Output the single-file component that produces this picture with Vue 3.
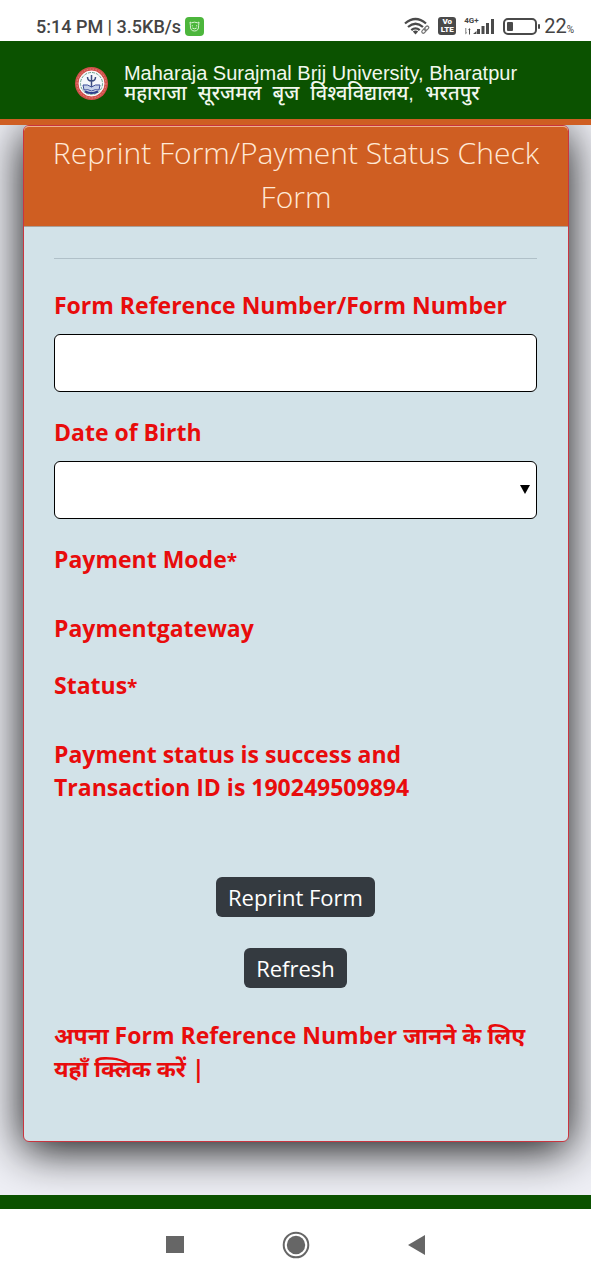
<script setup>
import { ref } from 'vue'

const formNumber = ref('')
const birthDate = ref('')
</script>

<template>
  <div class="screen">
    <div class="status-bar">
      <div class="status-group">
        <span class="clock">5:14 PM | 3.5KB/s</span>
        <svg class="app-badge" width="19" height="19" viewBox="0 0 19 19" aria-hidden="true">
          <rect width="19" height="19" rx="4" fill="#4cb63c" />
          <path d="M5 5l1.500.8Q9.500 4.500 12.500 5.800L14 5l-.4 3.500q.4 5.500-4.100 5.500T5.400 8.500z" fill="none" stroke="#d9f3d3" stroke-width="1" />
          <path d="M7.300 8.200v1.200M11.700 8.200v1.200M7.300 11q2.200 1.600 4.400 0" fill="none" stroke="#d9f3d3" stroke-width="1" />
        </svg>
      </div>
      <div class="status-group">
        <svg width="26" height="19" viewBox="0 0 26 19" fill="none" stroke="#4a4a4a" aria-hidden="true">
          <path d="M1 6.500Q11.500-2.500 22 6.500M4 10Q11.500 3.500 19 10M7.300 13.200Q11.500 9.600 15.700 13.200" stroke-width="2.300" />
          <path d="M8.800 14.500q2.700-2 5.400 0L11.500 17.500z" fill="#4a4a4a" stroke="none" />
          <g stroke="#777" stroke-width="1.200">
            <rect x="17.500" y="12.500" width="5" height="3" rx="1.500" transform="rotate(-45 20 14)" />
            <rect x="20" y="9.800" width="5" height="3" rx="1.500" transform="rotate(-45 22.500 11.300)" />
          </g>
        </svg>
        <span class="volte"><span>Vo</span><span>LTE</span></span>
        <span class="signal">
          <span class="network">4G+</span>
          <svg width="31" height="17" viewBox="0 0 31 17" fill="#4a4a4a" aria-hidden="true">
            <path d="M1 10h1.200v4.500H3L1.500 16.500V10zM5 16.500V12H4.200L5.500 10l1 2H6v4.500z" />
            <path d="M9 16l3.500-3v3zM13 11h3v5h-3zM17.500 8h3v8h-3zM22 5h3v11h-3zM27 1h3v15h-3z" />
          </svg>
        </span>
        <svg width="37" height="17" viewBox="0 0 37 17" aria-hidden="true">
          <rect x="1" y="1" width="32" height="15" rx="4" fill="none" stroke="#4a4a4a" stroke-width="2" />
          <rect x="4" y="4" width="6" height="9" rx="1" fill="#4a4a4a" />
          <rect x="35" y="6" width="2" height="5" rx="1" fill="#4a4a4a" />
        </svg>
        <span class="battery">22<small>%</small></span>
      </div>
    </div>

    <header class="site-header">
      <svg class="crest" width="35" height="35" viewBox="0 0 35 35" aria-hidden="true">
        <circle cx="17.500" cy="17.500" r="16.500" fill="#d2504b" />
        <circle cx="17.500" cy="17.500" r="14.500" fill="none" stroke="#e08a80" stroke-width="1" stroke-dasharray="1.500 1.500" />
        <circle cx="17.500" cy="17.500" r="12.500" fill="#f5f8fc" stroke="#fff" />
        <circle cx="17.500" cy="17.500" r="11" fill="none" stroke="#6aa08d" stroke-width="1" stroke-dasharray="3 1" />
        <path d="M17.500 9v12M13.500 11q0 4 4 4t4-4M15 21h5" fill="none" stroke="#3c4d80" stroke-width="1.500" />
        <path d="M9 19q5-1 8.500 2 3.500-3 8.500-2l-1 5q-4-1-7.500 1-3.500-2-7.500-1z" fill="#c6d2ea" stroke="#3b4c98" stroke-width="1" />
        <path d="M11 25.500q6.500 3 13 0" fill="none" stroke="#2f3f8b" stroke-width="2" />
      </svg>
      <div class="university">
        <span>Maharaja Surajmal Brij University, Bharatpur</span>
        <span class="university-hi" lang="hi">महाराजा &nbsp;सूरजमल &nbsp;बृज &nbsp;विश्वविद्यालय, &nbsp;भरतपुर</span>
      </div>
    </header>

    <main class="page">
      <section class="card">
        <h1>Reprint Form/Payment Status Check Form</h1>
        <form class="card-body" @submit.prevent>
          <hr />
          <label for="form-number">Form Reference Number/Form Number</label>
          <input id="form-number" v-model="formNumber" class="field" type="text" />
          <label for="birth-date">Date of Birth</label>
          <div class="select-wrap">
            <select id="birth-date" v-model="birthDate" class="field">
              <option value=""></option>
            </select>
            <svg class="arrow" width="10" height="9" viewBox="0 0 10 9" aria-hidden="true"><path d="M0 0h10L5 9z" /></svg>
          </div>
          <p class="row">Payment Mode<small>*</small></p>
          <p class="value">Paymentgateway</p>
          <p class="row">Status<small>*</small></p>
          <p class="value result">Payment status is success and Transaction ID is 190249509894</p>
          <div class="actions">
            <button type="button">Reprint Form</button>
            <button type="button">Refresh</button>
          </div>
          <a class="help" href="#" lang="hi">अपना Form Reference Number जानने के लिए यहाँ क्लिक करें |</a>
        </form>
      </section>
    </main>

    <footer class="site-footer"></footer>

    <nav class="system-nav">
      <button type="button" aria-label="Recent apps">
        <svg width="28" height="28" viewBox="0 0 28 28"><path d="M5 5h18v17H5z" /></svg>
      </button>
      <button type="button" aria-label="Home">
        <svg width="28" height="28" viewBox="0 0 28 28"><circle cx="14" cy="14" r="12.300" fill="none" stroke="#666" stroke-width="2" /><circle cx="14" cy="14" r="9.200" /></svg>
      </button>
      <button type="button" aria-label="Back">
        <svg width="28" height="28" viewBox="0 0 28 28"><path d="M5 14L22 4v20z" /></svg>
      </button>
    </nav>
  </div>
</template>

<style>
body {
  margin: 0;
}
</style>

<style scoped>
.screen {
  display: flex;
  flex-direction: column;
  min-height: 100vh;
  background: #fff;
  font-family: "Open Sans", "Noto Sans", sans-serif;
}

.status-bar {
  display: flex;
  justify-content: space-between;
  align-items: center;
  height: 30px;
  padding: 11px 17px 0 36px;
  color: #444;
  font-family: Roboto, sans-serif;
}

.status-group {
  display: flex;
  align-items: center;
  gap: 8px;
}

.clock {
  font-size: 18px;
  font-weight: 500;
}

.app-badge {
  margin-left: -4px;
}

.volte {
  display: flex;
  flex-direction: column;
  width: 16px;
  height: 16px;
  padding: 1px;
  border-radius: 3px;
  background: #4a4a4a;
  color: #fff;
  font-size: 8px;
  font-weight: 900;
  line-height: 8px;
  text-align: center;
}

.signal {
  position: relative;
  display: flex;
}

.network {
  position: absolute;
  top: -1px;
  left: 0;
  font-size: 8px;
  font-weight: 700;
  line-height: 8px;
}

.battery {
  margin-left: -4px;
  font-size: 20px;
}

.battery small {
  font-size: 10px;
}

.site-header {
  display: flex;
  justify-content: center;
  align-items: center;
  gap: 15px;
  min-height: 78px;
  padding-top: 6px;
  box-sizing: border-box;
  background: #0b5200;
  color: #f2f8ee;
}

.university {
  display: flex;
  flex-direction: column;
  font-family: "Liberation Sans", "Noto Sans", sans-serif;
  font-size: 20px;
  line-height: 20px;
  white-space: nowrap;
}

.university-hi {
  font-weight: 500;
}

.page {
  flex: 1;
  padding: 0 22px 53px 23px;
  border-top: 6px solid #cf5e22;
  background: #eeeff5;
  overflow: hidden;
}

.card {
  border: 1px solid #c9353f;
  border-radius: 6px;
  background: #d2e2e8;
  box-shadow: 0 8px 45px rgba(0, 0, 0, 0.95);
}

h1 {
  margin: 0;
  padding: 4px 20px 7px;
  border-top: 1px solid #f0b08c;
  border-bottom: 1px solid #a9a099;
  border-radius: 5px 5px 0 0;
  background: #cf5e22;
  color: #ffe9d6;
  font-size: 30px;
  font-weight: 300;
  line-height: 44px;
  text-align: center;
}

.card-body {
  display: flex;
  flex-direction: column;
  padding: 31px 31px 56px 30px;
  color: #e80c0c;
  font-size: 23px;
  font-weight: 700;
  line-height: 33px;
}

hr {
  width: 100%;
  margin: 0 0 30px;
  border: 0;
  border-top: 1px solid #b0c0c8;
}

label {
  margin-bottom: 12px;
}

.field {
  display: block;
  width: 100%;
  height: 58px;
  margin: 0 0 24px;
  padding: 0 12px;
  border: 1px solid #000;
  border-radius: 6px;
  box-sizing: border-box;
  appearance: none;
  background: #fff;
  font: inherit;
}

.select-wrap {
  position: relative;
}

.arrow {
  position: absolute;
  top: 24px;
  right: 7px;
  pointer-events: none;
}

p {
  margin: 0;
}

.row {
  margin-bottom: 36px;
}

small {
  font-size: 19px;
  line-height: 1;
}

.value {
  margin-bottom: 24px;
}

.result {
  width: 80%;
}

.actions {
  display: flex;
  flex-direction: column;
  align-items: center;
  gap: 31px;
  margin: 49px 0 31px;
}

.actions button {
  height: 40px;
  padding: 0 12px;
  border: 0;
  border-radius: 6px;
  background: #343a40;
  color: #fff;
  font: inherit;
  font-size: 22px;
  font-weight: 400;
}

.help {
  color: inherit;
  text-decoration: none;
}

.site-footer {
  height: 14px;
  background: #0b5200;
}

.system-nav {
  display: flex;
  justify-content: center;
  align-items: center;
  gap: 93px;
  height: 71px;
}

.system-nav button {
  display: flex;
  padding: 0;
  border: 0;
  background: none;
}

.system-nav svg {
  fill: #666;
}
</style>
